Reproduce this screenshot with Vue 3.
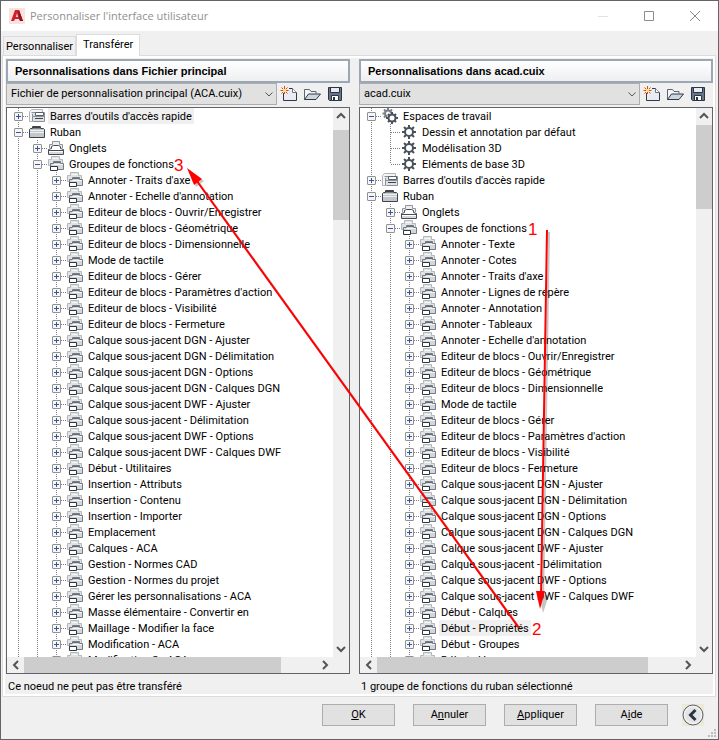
<template>
  <div class="dialog">
    <header class="titlebar">
      <svg class="app-logo" viewBox="0 0 16 16">
        <rect width="16" height="16" fill="#f9e3df" />
        <path d="M6 2h4l4 11h-3l-1-2H6l-1 2H2z" fill="#d0202b" />
        <path d="M8 5l1 4H7z" fill="#f9e3df" />
        <path d="M10 2l4 11h-3L9 5z" fill="#8e1520" />
      </svg>
      <h1>Personnaliser l'interface utilisateur</h1>
      <div class="window-controls">
        <button type="button" aria-label="Réduire" disabled>
          <svg viewBox="0 0 12 12"><path d="M1 6.500h10" stroke="#e2e2e2" /></svg>
        </button>
        <button type="button" aria-label="Agrandir">
          <svg viewBox="0 0 12 12"><path d="M1.500 1.500h9v9h-9z" stroke="#8c8c8c" /></svg>
        </button>
        <button type="button" aria-label="Fermer">
          <svg viewBox="0 0 12 12"><path d="M1 1l10 10M11 1L1 11" stroke="#8c8c8c" /></svg>
        </button>
      </div>
    </header>

    <nav class="tabs">
      <button
        v-for="tab in tabs"
        :key="tab"
        type="button"
        class="tab"
        :class="{ active: tab === activeTab }"
        @click="activeTab = tab"
      >{{ tab }}</button>
    </nav>

    <main class="page">
      <div class="panels">
        <section v-for="panel in panels" :key="panel.id" class="panel" :class="panel.id">
          <h2>{{ panel.title }}</h2>

          <div class="file-bar">
            <div class="combo">
              <select :aria-label="panel.title">
                <option>{{ panel.file }}</option>
              </select>
              <svg class="chevron" viewBox="0 0 8 5"><path d="M.5.5L4 4 7.500.5" /></svg>
            </div>
            <div class="tools">
              <button type="button" aria-label="Nouveau">
                <svg viewBox="0 0 18 16">
                  <path d="M3.500 7v7.500h13V6.500l-4-4H9" fill="#e9edf1" stroke="#2f3947" />
                  <path d="M12.500 2.500v4h4" fill="#fff" stroke="#6b7684" />
                  <path d="M4.500 0v8M.5 4.500h8M1.500 1.500l6 6M7.500 1.500l-6 6" stroke="#e8471c" />
                  <rect x="3" y="3" width="3" height="3" fill="#ffe066" />
                </svg>
              </button>
              <button type="button" aria-label="Ouvrir">
                <svg viewBox="0 0 18 16">
                  <path d="M1.500 13.500v-10h5l1.500 2h5v2" fill="#f3f5f7" stroke="#5b6573" />
                  <path d="M1.500 13.500l4-5.500h12l-4.500 5.500z" fill="#cdd5dd" stroke="#2f3947" />
                </svg>
              </button>
              <button type="button" aria-label="Enregistrer">
                <svg viewBox="0 0 18 16">
                  <path d="M2.500 1.500h13v13h-12l-1-1z" fill="#66758a" stroke="#2b3442" />
                  <path d="M4.500 1.500h9v5h-9z" fill="#e8ebef" stroke="#2b3442" />
                  <path d="M5.500 9.500h7v5h-7z" fill="#fff" stroke="#2b3442" />
                  <rect x="7" y="11" width="2" height="3" fill="#2b3442" />
                </svg>
              </button>
            </div>
          </div>

          <div class="tree-box">
            <ul class="tree">
              <li v-for="(row, i) in panel.rows" :key="i" class="row">
                <span v-for="n in row.level" :key="n" class="guide"></span>
                <span class="node" :class="{ last: row.last }">
                  <button
                    v-if="row.state"
                    type="button"
                    class="expander"
                    :class="row.state"
                    :aria-label="row.state === 'open' ? 'Réduire' : 'Développer'"
                  ></button>
                </span>
                <svg class="icon" viewBox="0 0 16 16">
                  <template v-if="row.icon === 'toolbar'">
                    <path d="M.5 13.500v-10l2-2h11v12z" fill="#f4f5f6" stroke="#b0b4b9" />
                    <path d="M2.500 4.500h13v9h-11" fill="#dfe2e5" stroke="#8b9097" />
                    <path d="M3.500 6v7M3.500 8.500h12" stroke="#8b9097" />
                    <path d="M6.500 4.500h8v3h-8z" fill="#fff" stroke="#5a616a" />
                    <path d="M6 10.500h8" stroke="#3f464f" />
                  </template>
                  <template v-else-if="row.icon === 'ribbon'">
                    <path d="M.5 5.500l1-1h2v-2h8v2h3l1 1v8H.5z" fill="#c2c7cc" stroke="#3d444d" />
                    <path d="M4 3.500h7" stroke="#3d444d" stroke-width="2" />
                    <path d="M1 6.500h14M1 8.500h14" stroke="#eef0f2" />
                  </template>
                  <template v-else-if="row.icon === 'tabs'">
                    <path d="M1.500 8V4.500h3v-3h7v3h3V8" fill="#eceef0" stroke="#8e949b" />
                    <path d="M.5 14.500v-5l3-1v-2l2-1h5l2 1v2l3 1v5z" fill="#fff" stroke="#454c55" />
                    <path d="M1 10.500h14" stroke="#454c55" />
                    <path d="M1 13h14" stroke="#d5d9dd" stroke-width="2" />
                  </template>
                  <template v-else-if="row.icon === 'group'">
                    <path d="M.5 9.500v-6h3v-3h8v3h3v6z" fill="#dfe1e3" stroke="#b4b7bb" />
                    <path d="M4.500 2.500h6" stroke="#f7f7f8" />
                    <path d="M2.500 13.500v-6h3v-2h7v2h3v6z" fill="#d3d7db" stroke="#757b83" />
                    <path d="M6 6.500h6" stroke="#666d76" />
                    <path d="M5 8.500h10" stroke="#f4f5f6" />
                    <path d="M2.500 10.500h7v4h-7z" fill="#fff" stroke="#2f363f" />
                  </template>
                  <template v-else-if="row.icon === 'gears'">
                    <g stroke="#7a8088" stroke-width="2">
                      <circle cx="6" cy="5.500" r="3" />
                      <path d="M6 0v2M.5 5.500h2M2 1.500l2 2M10 1.500l-2 2M2 9.500l2-2" />
                    </g>
                    <circle cx="10" cy="10" r="5" fill="#fff" />
                    <g stroke="#4a525c" stroke-width="2">
                      <circle cx="10" cy="10" r="3.500" fill="#fff" />
                      <path d="M10 4v2M10 14v2M4 10h2M14 10h2M6 6l1.500 1.500M14 6l-1.500 1.500M6 14l1.500-1.500M14 14l-1.500-1.500" />
                    </g>
                  </template>
                  <template v-else>
                    <g stroke="#4a525c" stroke-width="2">
                      <circle cx="8" cy="8" r="4" fill="#fff" />
                      <path d="M8 1v3M8 12v3M1 8h3M12 8h3M3 3l2 2M13 3l-2 2M3 13l2-2M13 13l-2-2" />
                    </g>
                  </template>
                </svg>
                <span class="label" :class="{ selected: row.selected }">{{ row.text }}</span>
              </li>
            </ul>
            <div class="scroll vertical">
              <svg viewBox="0 0 16 16"><path d="M4 10l4-4 4 4" /></svg>
              <div class="thumb"></div>
              <svg class="end" viewBox="0 0 16 16"><path d="M4 6l4 4 4-4" /></svg>
            </div>
            <div class="scroll horizontal">
              <svg viewBox="0 0 16 16"><path d="M10 4L6 8l4 4" /></svg>
              <div class="thumb"></div>
              <svg class="end" viewBox="0 0 16 16"><path d="M6 4l4 4-4 4" /></svg>
            </div>
            <div class="corner"></div>
          </div>

          <p class="status">{{ panel.status }}</p>
        </section>
      </div>
    </main>

    <footer class="actions">
      <button type="button" class="action"><u>O</u>K</button>
      <button type="button" class="action">A<u>n</u>nuler</button>
      <button type="button" class="action"><u>A</u>ppliquer</button>
      <button type="button" class="action">A<u>i</u>de</button>
      <button type="button" class="collapse" aria-label="Masquer les détails">
        <svg viewBox="0 0 22 22">
          <rect width="22" height="22" fill="#ece9d8" />
          <circle cx="11" cy="11" r="10" fill="#e3e4ea" stroke="#5f6066" />
          <circle cx="11" cy="11" r="8.500" stroke="#f8f8fa" />
          <path d="M13.500 6L8.500 11l5 5" stroke="#2d323c" stroke-width="3" />
        </svg>
      </button>
      <svg class="grip" viewBox="0 0 8 8">
        <path d="M6 0h2v2H6zM3 3h2v2H3zM6 3h2v2H6zM0 6h2v2H0zM3 6h2v2H3zM6 6h2v2H6z" fill="#bdbdbd" />
      </svg>
    </footer>

    <!-- Annotations rouges par-dessus la boîte de dialogue -->
    <svg class="annotations" width="719" height="740" viewBox="0 0 719 740">
      <g class="shadow">
        <path d="M549 232l-6 370M521 630L196 179" />
        <path class="head" d="M543 613l-4-18h10zM189 170l15 11-8 6z" />
      </g>
      <g class="arrow">
        <path d="M547 230l-6 366M519 628L194 177" />
        <path class="head" d="M540 609l-4-18h9zM187 168l15 11-8 6z" />
      </g>
      <text x="528" y="235">1</text>
      <text x="532" y="635">2</text>
      <text x="174" y="171">3</text>
    </svg>
  </div>
</template>

<script setup>
import { ref } from 'vue'

const tabs = ['Personnaliser', 'Transférer']
const activeTab = ref('Transférer')

const groups = (names, selected) =>
  names.map((text) => ({
    text,
    level: 2,
    icon: 'group',
    state: 'closed',
    selected: text === selected
  }))

const panels = [
  {
    id: 'main-file',
    title: 'Personnalisations dans Fichier principal',
    file: 'Fichier de personnalisation principal (ACA.cuix)',
    status: 'Ce noeud ne peut pas être transféré',
    rows: [
      { text: "Barres d'outils d'accès rapide", level: 0, icon: 'toolbar', state: 'closed', selected: true },
      { text: 'Ruban', level: 0, icon: 'ribbon', state: 'open' },
      { text: 'Onglets', level: 1, icon: 'tabs', state: 'closed' },
      { text: 'Groupes de fonctions', level: 1, icon: 'group', state: 'open' },
      ...groups([
        "Annoter - Traits d'axe",
        "Annoter - Echelle d'annotation",
        'Editeur de blocs - Ouvrir/Enregistrer',
        'Editeur de blocs - Géométrique',
        'Editeur de blocs - Dimensionnelle',
        'Mode de tactile',
        'Editeur de blocs - Gérer',
        "Editeur de blocs - Paramètres d'action",
        'Editeur de blocs - Visibilité',
        'Editeur de blocs - Fermeture',
        'Calque sous-jacent DGN - Ajuster',
        'Calque sous-jacent DGN - Délimitation',
        'Calque sous-jacent DGN - Options',
        'Calque sous-jacent DGN - Calques DGN',
        'Calque sous-jacent DWF - Ajuster',
        'Calque sous-jacent - Délimitation',
        'Calque sous-jacent DWF - Options',
        'Calque sous-jacent DWF - Calques DWF',
        'Début - Utilitaires',
        'Insertion - Attributs',
        'Insertion - Contenu',
        'Insertion - Importer',
        'Emplacement',
        'Calques - ACA',
        'Gestion - Normes CAD',
        'Gestion - Normes du projet',
        'Gérer les personnalisations - ACA',
        'Masse élémentaire - Convertir en',
        'Maillage - Modifier la face',
        'Modification - ACA',
        'Modification S - ACA'
      ])
    ]
  },
  {
    id: 'acad-file',
    title: 'Personnalisations dans acad.cuix',
    file: 'acad.cuix',
    status: '1 groupe de fonctions du ruban sélectionné',
    rows: [
      { text: 'Espaces de travail', level: 0, icon: 'gears', state: 'open' },
      { text: 'Dessin et annotation par défaut', level: 1, icon: 'gear' },
      { text: 'Modélisation 3D', level: 1, icon: 'gear' },
      { text: 'Eléments de base 3D', level: 1, icon: 'gear', last: true },
      { text: "Barres d'outils d'accès rapide", level: 0, icon: 'toolbar', state: 'closed' },
      { text: 'Ruban', level: 0, icon: 'ribbon', state: 'open' },
      { text: 'Onglets', level: 1, icon: 'tabs', state: 'closed' },
      { text: 'Groupes de fonctions', level: 1, icon: 'group', state: 'open' },
      ...groups([
        'Annoter - Texte',
        'Annoter - Cotes',
        "Annoter - Traits d'axe",
        'Annoter - Lignes de repère',
        'Annoter - Annotation',
        'Annoter - Tableaux',
        "Annoter - Echelle d'annotation",
        'Editeur de blocs - Ouvrir/Enregistrer',
        'Editeur de blocs - Géométrique',
        'Editeur de blocs - Dimensionnelle',
        'Mode de tactile',
        'Editeur de blocs - Gérer',
        "Editeur de blocs - Paramètres d'action",
        'Editeur de blocs - Visibilité',
        'Editeur de blocs - Fermeture',
        'Calque sous-jacent DGN - Ajuster',
        'Calque sous-jacent DGN - Délimitation',
        'Calque sous-jacent DGN - Options',
        'Calque sous-jacent DGN - Calques DGN',
        'Calque sous-jacent DWF - Ajuster',
        'Calque sous-jacent - Délimitation',
        'Calque sous-jacent DWF - Options',
        'Calque sous-jacent DWF - Calques DWF',
        'Début - Calques',
        'Début - Propriétés',
        'Début - Groupes',
        'Début - Vues'
      ], 'Début - Propriétés')
    ]
  }
]
</script>

<style>
body {
  margin: 0;
}
</style>

<style scoped>
* {
  box-sizing: border-box;
}

.dialog {
  position: relative;
  display: flex;
  flex-direction: column;
  height: 100vh;
  overflow: hidden;
  background: #f0f0f0;
  border: 1px solid #646468;
  color: #000;
  font-family: Roboto, "Liberation Sans", sans-serif;
  font-size: 11px;
  line-height: 16px;
}

button,
select {
  padding: 0;
  border: none;
  border-radius: 0;
  background: none;
  color: inherit;
  font: inherit;
}

svg {
  display: block;
  fill: none;
}

/* Barre de titre */
.titlebar {
  display: flex;
  align-items: center;
  height: 30px;
  flex: none;
  padding-left: 8px;
  background: #fff;
}

.app-logo {
  width: 16px;
  height: 16px;
}

h1 {
  flex: 1;
  margin: 0 0 0 5px;
  color: #8f8f8f;
  font-family: "Open Sans", sans-serif;
  font-size: 11px;
  font-weight: 400;
}

.window-controls {
  display: flex;
}

.window-controls button {
  display: flex;
  align-items: center;
  justify-content: center;
  width: 46px;
  height: 30px;
}

.window-controls svg {
  width: 12px;
  height: 12px;
}

/* Onglets */
.tabs {
  display: flex;
  align-items: flex-end;
  flex: none;
  height: 24px;
  padding-left: 2px;
}

.tab {
  height: 19px;
  padding: 1px 2px 0;
  border: 1px solid #dcdcdc;
  border-bottom: none;
}

.tab.active {
  height: 22px;
  margin-bottom: -1px;
  padding: 0 6px 2px;
  background: #fff;
  z-index: 1;
}

.page {
  display: flex;
  flex: 1;
  min-height: 0;
  margin: 0 2px 0 1px;
  padding: 2px;
  background: #fff;
  border: 1px solid #dcdcdc;
}

.panels {
  display: grid;
  grid-template-columns: 344fr 354fr;
  grid-template-rows: 100%;
  gap: 9px;
  flex: 1;
  min-width: 0;
  padding: 1px 0 0 1px;
  background: #f0f0f0;
}

.panel {
  display: flex;
  flex-direction: column;
  min-width: 0;
  min-height: 0;
}

h2 {
  flex: none;
  height: 24px;
  margin: 0;
  padding: 0 7px;
  border: 2px solid #9ba7b3;
  background: linear-gradient(#fff, #eeeff1);
  font-family: "Liberation Sans", sans-serif;
  font-size: 11px;
  font-weight: 700;
  line-height: 20px;
}

.file-bar {
  display: flex;
  align-items: center;
  flex: none;
  gap: 3px;
  padding-right: 6px;
}

.combo {
  position: relative;
  flex: 1;
  min-width: 0;
}

.combo select {
  display: block;
  width: 100%;
  height: 22px;
  padding: 0 20px 0 4px;
  appearance: none;
  background: #e1e1e1;
  border: 1px solid #adadad;
}

.chevron {
  position: absolute;
  right: 4px;
  top: 9px;
  width: 8px;
  height: 5px;
  stroke: #555;
  pointer-events: none;
}

.tools {
  display: flex;
  gap: 5px;
}

.tools svg {
  width: 18px;
  height: 16px;
}

/* Arborescence */
.tree-box {
  display: grid;
  grid-template-columns: 1fr 16px;
  grid-template-rows: 1fr 16px;
  flex: 1;
  min-height: 0;
  margin-top: 2px;
  background: #fff;
  border: 1px solid #646468;
}

.tree {
  min-height: 0;
  margin: 0;
  padding: 0;
  overflow: hidden;
  list-style: none;
}

.row {
  display: flex;
  height: 16px;
  white-space: nowrap;
}

.guide,
.node {
  flex: none;
  background-image: repeating-linear-gradient(#808080 0 1px, transparent 1px 2px);
  background-position: 11px 0;
  background-repeat: no-repeat;
  background-size: 1px 100%;
}

.guide {
  width: 19px;
}

.node {
  display: flex;
  align-items: center;
  width: 22px;
  padding-left: 7px;
  background-image:
    repeating-linear-gradient(#808080 0 1px, transparent 1px 2px),
    repeating-linear-gradient(90deg, #808080 0 1px, transparent 1px 2px);
  background-position: 11px 0, 12px 8px;
  background-size: 1px 100%, 10px 1px;
}

.node.last {
  background-size: 1px 8px, 10px 1px;
}

.expander {
  width: 9px;
  height: 9px;
  border: 1px solid #919191;
  border-radius: 1px;
  background:
    linear-gradient(#3455a4, #3455a4) center / 5px 1px no-repeat,
    #f6f6f6;
}

.expander.closed {
  background:
    linear-gradient(#3455a4, #3455a4) center / 5px 1px no-repeat,
    linear-gradient(#3455a4, #3455a4) center / 1px 5px no-repeat,
    #f6f6f6;
}

.icon {
  flex: none;
  width: 16px;
  height: 16px;
}

.label {
  margin-left: 3px;
  padding: 1px 2px 0;
  line-height: 15px;
}

.label.selected {
  background: #f0f0f0;
}

.scroll {
  display: flex;
  background: #f0f0f0;
}

.scroll svg {
  flex: none;
  width: 16px;
  height: 16px;
  stroke: #555;
  stroke-width: 2;
}

.scroll .end {
  margin-left: auto;
}

.vertical {
  flex-direction: column;
}

.vertical .end {
  margin: auto 0 0;
}

.horizontal {
  padding-left: 1px;
}

.thumb {
  flex: none;
  background: #cdcdcd;
}

.vertical .thumb {
  height: 90px;
  margin-top: 6px;
}

.acad-file .vertical .thumb {
  height: 84px;
  margin-top: 1px;
}

.horizontal .thumb {
  width: 79%;
}

.acad-file .horizontal .thumb {
  width: 81%;
}

.corner {
  background: #f0f0f0;
}

.status {
  flex: none;
  height: 20px;
  margin: 0;
  padding: 5px 2px 0;
  line-height: 15px;
}

/* Boutons du bas */
.actions {
  position: relative;
  display: flex;
  justify-content: flex-end;
  align-items: center;
  flex: none;
  gap: 18px;
  height: 42px;
  padding: 0 14px 6px 0;
}

.action {
  width: 73px;
  height: 22px;
  background: #e1e1e1;
  border: 1px solid #adadad;
}

.collapse {
  margin-left: -4px;
}

.collapse svg {
  width: 22px;
  height: 22px;
}

.grip {
  position: absolute;
  right: 2px;
  bottom: 2px;
  width: 8px;
  height: 8px;
}

.annotations {
  position: absolute;
  left: -1px;
  top: -1px;
  pointer-events: none;
}

.annotations path {
  stroke-width: 2;
}

.annotations .head {
  stroke: none;
}

.arrow {
  stroke: #f00;
}

.arrow .head {
  fill: #f00;
}

.shadow {
  stroke: #000;
  opacity: 0.22;
}

.shadow .head {
  fill: #000;
}

.annotations text {
  fill: #f00;
  font-family: "Liberation Sans", sans-serif;
  font-size: 17px;
}
</style>
